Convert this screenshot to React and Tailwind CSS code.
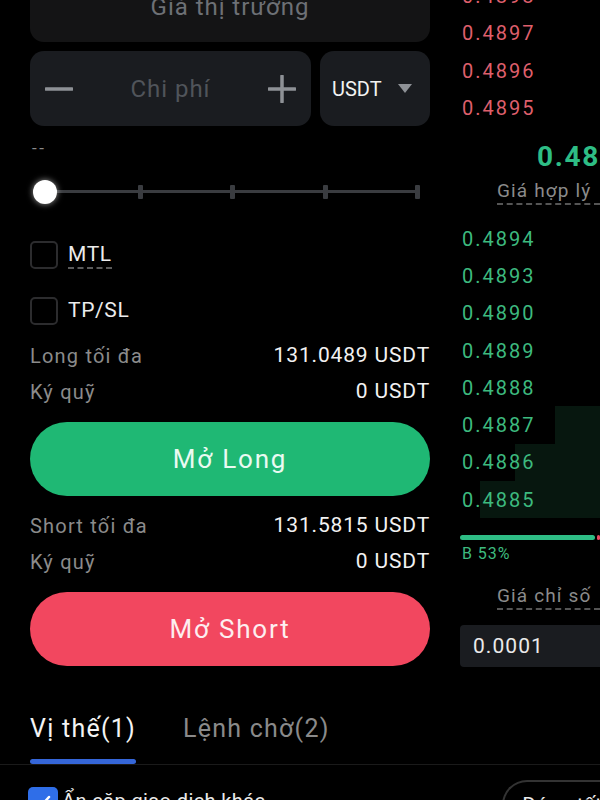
const asks = ["0.4898", "0.4897", "0.4896", "0.4895"];

const bids = [
  { price: "0.4894", depth: 0 },
  { price: "0.4893", depth: 0 },
  { price: "0.4890", depth: 0 },
  { price: "0.4889", depth: 0 },
  { price: "0.4888", depth: 0 },
  { price: "0.4887", depth: 45 },
  { price: "0.4886", depth: 85 },
  { price: "0.4885", depth: 120 },
];

const Checkbox = ({ label }) => (
  <div className="flex items-center h-[28px]">
    <div className="w-[28px] h-[28px] rounded-[5px] border-2 border-[#2c2c2e]" />
    <span className="ml-[10px] text-[21px] leading-[26px] text-[#ececec] tracking-[0.03em] border-b-2 border-dashed border-[#5a5a5a]">
      {label}
    </span>
  </div>
);

const InfoRow = ({ label, value }) => (
  <div className="flex items-center justify-between h-[36px]">
    <span className="text-[20px] text-[#8b8b8b] tracking-[0.06em]">{label}</span>
    <span className="text-[21px] text-[#f2f2f2] tracking-[0.04em]">{value}</span>
  </div>
);

export default function App() {
  return (
    <div className="w-[600px] h-[800px] overflow-hidden bg-black font-['Roboto',sans-serif]">
      <div className="flex">
        {/* order form */}
        <div className="ml-[30px] w-[400px]">
          <div className="h-[70px] -mt-[28px] rounded-[14px] bg-[#141415] flex items-center justify-center text-[24px] text-[#6d7075] tracking-[0.04em]">
            Giá thị trường
          </div>

          <div className="mt-[9px] flex gap-[9px] h-[75px]">
            <div className="w-[281px] rounded-[14px] bg-[#1a1c20] flex items-center px-[15px]">
              <svg width="28" height="28" viewBox="0 0 28 28">
                <path d="M1 14h26" stroke="#8e9196" strokeWidth="3.5" strokeLinecap="round" />
              </svg>
              <span className="flex-1 text-center text-[24px] text-[#50545a] tracking-[0.04em]">Chi phí</span>
              <svg width="28" height="28" viewBox="0 0 28 28">
                <path d="M1 14h26M14 1v26" stroke="#8e9196" strokeWidth="3.5" strokeLinecap="round" />
              </svg>
            </div>
            <div className="flex-1 rounded-[14px] bg-[#1a1c20] flex items-center justify-between pl-[12px] pr-[18px]">
              <span className="text-[20px] text-[#f2f2f2]">USDT</span>
              <svg width="14" height="10" viewBox="0 0 14 10">
                <path d="M0 0h14L7 9z" fill="#8e9196" />
              </svg>
            </div>
          </div>

          <div className="mt-[12px] h-[20px] leading-[20px] text-[17px] text-[#8b8b8b] pl-[2px] tracking-[0.15em]">--</div>

          {/* leverage slider */}
          <div className="relative mt-[22px] ml-[3px] w-[387px] h-[24px]">
            <div className="absolute left-[12px] right-[2px] top-[10px] h-[3px] bg-[#3a3c40]" />
            <div className="absolute left-[12px] right-0 top-[5px] flex justify-between">
              {[0, 1, 2, 3, 4].map((i) => (
                <div key={i} className="w-[5px] h-[14px] rounded-[1px] bg-[#3a3c40]" />
              ))}
            </div>
            <div className="absolute left-0 top-0 w-[24px] h-[24px] rounded-full bg-white shadow-[0_0_6px_rgba(255,255,255,0.6)]" />
          </div>

          <div className="mt-[37px]">
            <Checkbox label="MTL" />
          </div>
          <div className="mt-[28px]">
            <div className="flex items-center h-[28px]">
              <div className="w-[28px] h-[28px] rounded-[5px] border-2 border-[#2c2c2e]" />
              <span className="ml-[10px] text-[21px] text-[#ececec] tracking-[0.03em]">TP/SL</span>
            </div>
          </div>

          <div className="mt-[13px]">
            <InfoRow label="Long tối đa" value="131.0489 USDT" />
            <InfoRow label="Ký quỹ" value="0 USDT" />
          </div>
          <button className="mt-[12px] w-full h-[74px] rounded-full bg-[#1fb874] text-[26px] text-[#eafaf2] tracking-[0.07em]">
            Mở Long
          </button>

          <div className="mt-[12px]">
            <InfoRow label="Short tối đa" value="131.5815 USDT" />
            <InfoRow label="Ký quỹ" value="0 USDT" />
          </div>
          <button className="mt-[12px] w-full h-[74px] rounded-full bg-[#f2475f] text-[26px] text-[#fdeef0] tracking-[0.07em]">
            Mở Short
          </button>
        </div>

        {/* order book */}
        <div className="ml-[30px] w-[140px] overflow-hidden">
          <div className="-mt-[23px]">
            {asks.map((p) => (
              <div key={p} className="h-[37.5px] flex items-center pl-[2px] text-[20px] text-[#de5f6c] tracking-[0.1em]">
                {p}
              </div>
            ))}
          </div>

          <div className="h-[93px] flex flex-col">
            <div className="mt-[12px] pl-[77px] whitespace-nowrap text-[28px] font-bold text-[#2ebd85] tracking-[0.06em] leading-[36px]">
              0.4890
            </div>
            <div className="mt-[4px] ml-[37px] whitespace-nowrap text-[19px] text-[#8b8b8b] tracking-[0.06em] leading-[24px] border-b-2 border-dashed border-[#555]">
              Giá hợp lý
            </div>
          </div>

          <div>
            {bids.map((b) => (
              <div key={b.price} className="relative h-[37.3px] flex items-center pl-[2px]">
                {b.depth > 0 && (
                  <div className="absolute right-0 top-0 bottom-0 bg-[#07170f]" style={{ width: b.depth }} />
                )}
                <span className="relative text-[20px] text-[#3dba7f] tracking-[0.1em]">{b.price}</span>
              </div>
            ))}
          </div>

          <div className="mt-[17px] flex gap-[2px] h-[5px]">
            <div className="w-[135px] rounded-full bg-[#2ebd85]" />
            <div className="flex-1 rounded-full bg-[#e94b62]" />
          </div>
          <div className="mt-[4px] pl-[2px] text-[16px] leading-[20px] text-[#3dba7f] tracking-[0.06em]">B 53%</div>

          <div className="mt-[20px] ml-[37px] whitespace-nowrap text-[19px] text-[#8b8b8b] tracking-[0.06em] leading-[24px] border-b-2 border-dashed border-[#555]">
            Giá chỉ số
          </div>

          <div className="mt-[15px] h-[42px] rounded-l-[4px] bg-[#1a1c20] flex items-center pl-[13px] text-[21px] text-[#eaeaea] tracking-[0.05em]">
            0.0001
          </div>
        </div>
      </div>

      {/* tabs */}
      <div className="mt-[47px] px-[30px] flex gap-[47px]">
        <div className="flex flex-col">
          <span className="text-[25px] leading-[30px] text-[#f4f4f4] tracking-[0.05em]">Vị thế(1)</span>
          <div className="mt-[15px] h-[5px] rounded-full bg-[#3566d8]" />
        </div>
        <span className="text-[25px] leading-[30px] text-[#8a8a8a] tracking-[0.05em]">Lệnh chờ(2)</span>
      </div>
      <div className="h-px bg-[#1a1a1a]" />

      <div className="mt-[15px] pl-[28px] flex items-start justify-between">
        <div className="mt-[7px] flex items-start">
          <div className="w-[30px] h-[30px] rounded-[5px] bg-[#2f6ee8] flex items-center justify-center">
            <svg width="18" height="18" viewBox="0 0 18 18">
              <path d="M3 9l4 4 8-9" stroke="#fff" strokeWidth="2.5" fill="none" strokeLinecap="round" strokeLinejoin="round" />
            </svg>
          </div>
          <span className="ml-[4px] -mt-[1px] text-[20px] text-[#eaeaea] tracking-[0.02em] whitespace-nowrap">Ẩn cặp giao dịch khác</span>
        </div>
        <div className="w-[98px] h-[50px] rounded-l-full border-2 border-r-0 border-[#333] pl-[18px] pt-[8px] text-[21px] text-[#eaeaea] whitespace-nowrap overflow-hidden">
          Đóng tất cả
        </div>
      </div>
    </div>
  );
}
